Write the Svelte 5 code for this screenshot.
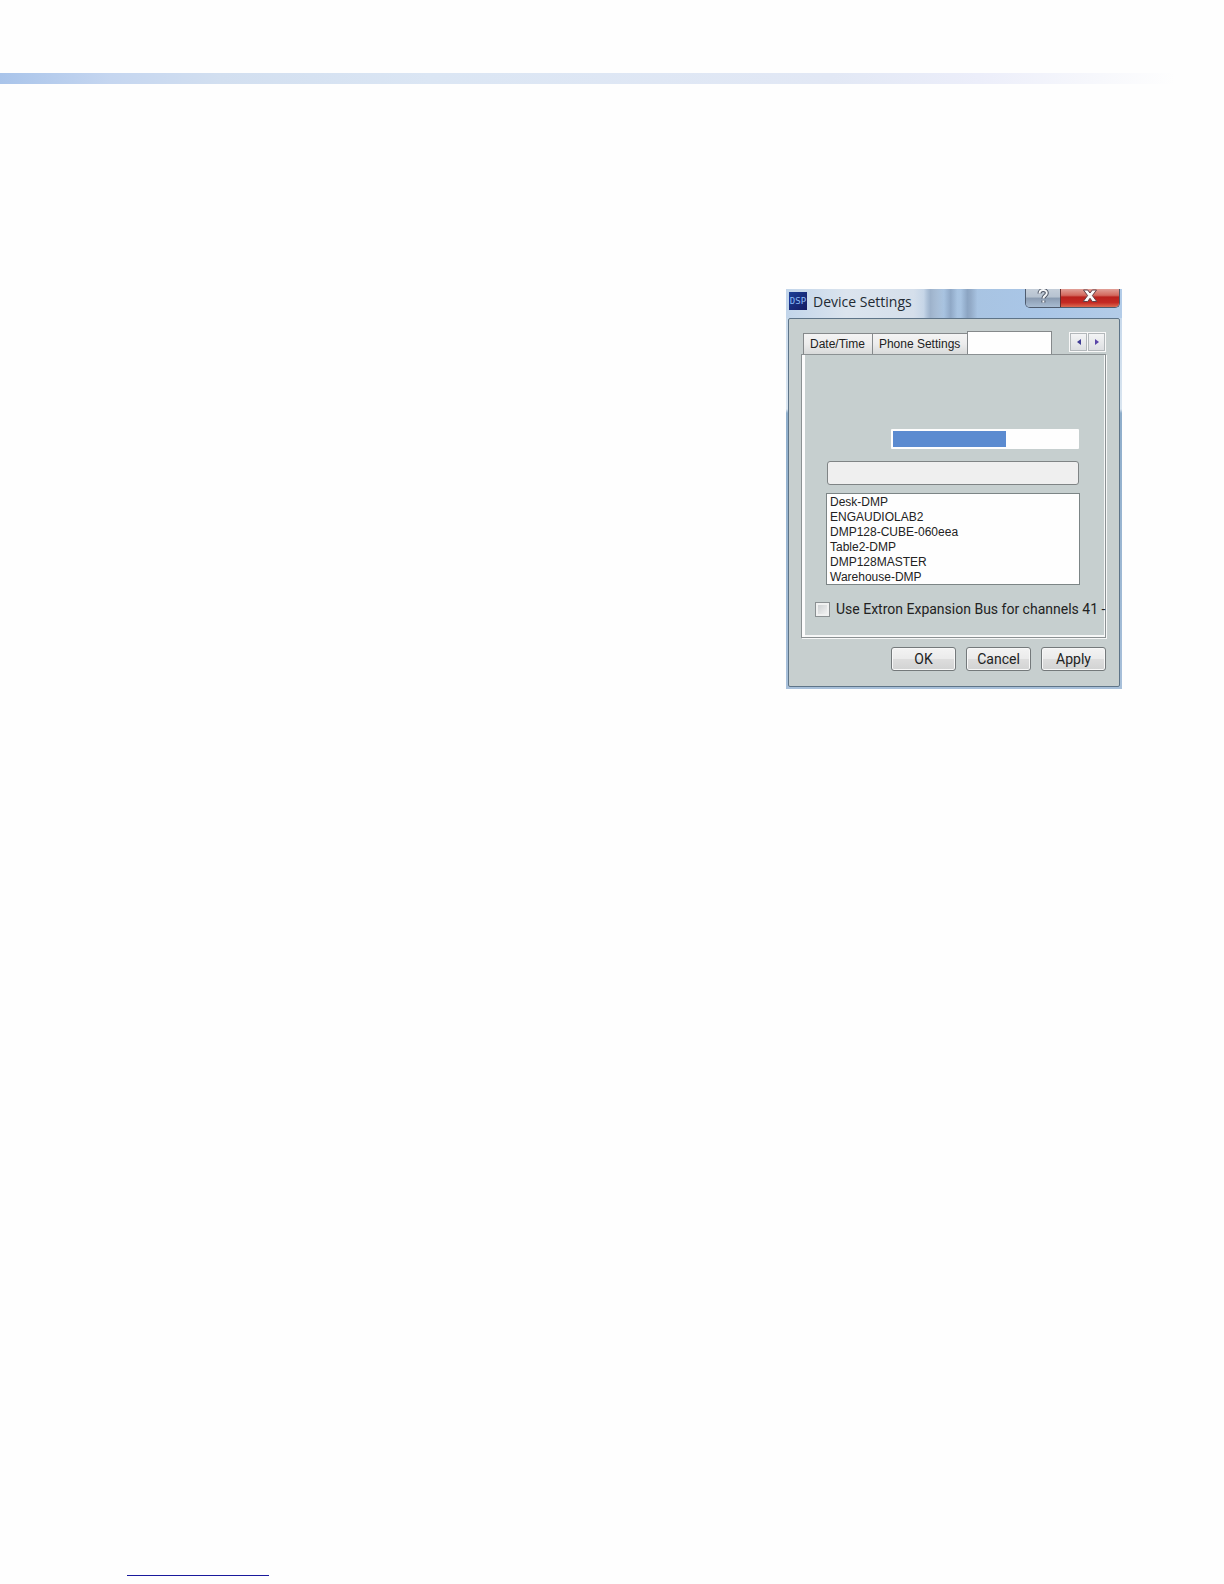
<script>
  let tabs = ['Date/Time', 'Phone Settings'];
  let devices = [
    'Desk-DMP',
    'ENGAUDIOLAB2',
    'DMP128-CUBE-060eea',
    'Table2-DMP',
    'DMP128MASTER',
    'Warehouse-DMP'
  ];
  let actions = ['OK', 'Cancel', 'Apply'];
</script>

<main class="page">
  <div class="rule"></div>

  <section class="window" aria-label="Device Settings">
    <header class="titlebar">
      <svg class="logo" viewBox="0 0 18 18" aria-hidden="true">
        <defs>
          <linearGradient id="logo-fill" x1="0" y1="0" x2="1" y2="1">
            <stop offset="0" stop-color="#1c3f96" />
            <stop offset="1" stop-color="#141a63" />
          </linearGradient>
        </defs>
        <rect width="18" height="18" fill="url(#logo-fill)" />
        <text x="9" y="12" text-anchor="middle" class="logo-text">DSP</text>
      </svg>
      <h1>Device Settings</h1>
      <div class="caption">
        <button class="help" aria-label="Help">
          <svg width="14" height="16" viewBox="0 0 14 16" aria-hidden="true">
            <path d="M3.5 4.5C3.5 0 10.8 0 10.8 4C10.8 6.7 7.4 6.6 7.4 9.6M7.4 11.4V13.6" fill="none" stroke="#4d5564" stroke-width="4" />
            <path d="M3.5 4.5C3.5 0 10.8 0 10.8 4C10.8 6.7 7.4 6.6 7.4 9.6M7.4 11.4V13.6" fill="none" stroke="#f4f6f8" stroke-width="2" />
          </svg>
        </button>
        <button class="close" aria-label="Close">
          <svg width="16" height="14" viewBox="0 0 16 14" aria-hidden="true">
            <path d="M1.5 1H5.7L8 4L10.3 1H14.5L10.4 6.6L14.8 12.5H10.3L8 9.3L5.7 12.5H1.2L5.6 6.6Z" fill="#fafafa" stroke="#634047" />
          </svg>
        </button>
      </div>
    </header>

    <div class="client">
      <div class="tabbar">
        <div class="tabs" role="tablist">
          {#each tabs as tab}
            <button class="tab" role="tab" aria-selected="false">{tab}</button>
          {/each}
          <button class="tab active" role="tab" aria-selected="true" aria-label="Current tab"></button>
        </div>
        <div class="scroller">
          <button aria-label="Previous tab">
            <svg width="6" height="8" viewBox="0 0 6 8" aria-hidden="true"><path d="M5 1V7L1 4Z" fill="#3f3c94" /></svg>
          </button>
          <button aria-label="Next tab">
            <svg width="6" height="8" viewBox="0 0 6 8" aria-hidden="true"><path d="M1 1V7L5 4Z" fill="#5a46a8" /></svg>
          </button>
        </div>
      </div>

      <div class="panel" role="tabpanel">
        <div class="controls">
          <div class="field">
            <span class="selection"></span>
            <input type="text" aria-label="Device name" />
          </div>
          <button class="wide" aria-label="Find devices"></button>
          <select class="devices" size="6" aria-label="Devices">
            {#each devices as device}
              <option>{device}</option>
            {/each}
          </select>
        </div>
        <label class="check">
          <input type="checkbox" />
          <span>Use Extron Expansion Bus for channels 41 -</span>
        </label>
      </div>

      <footer class="actions">
        {#each actions as action}
          <button>{action}</button>
        {/each}
      </footer>
    </div>
  </section>

  <a class="footlink" href="#top" aria-label="Back to top"></a>
</main>

<style>
  :global(body) {
    margin: 0;
    background: #fefefe;
  }

  .page,
  .page * {
    box-sizing: border-box;
  }

  .page {
    display: flex;
    flex-direction: column;
    min-height: 100vh;
    padding: 73px 0 8px;
    font-family: 'Liberation Sans', Arial, sans-serif;
    font-size: 12px;
    color: #222;
  }

  button,
  input,
  select {
    margin: 0;
    padding: 0;
    font: inherit;
    color: inherit;
  }

  .rule {
    height: 11px;
    background: linear-gradient(90deg, #a9c4ea 0%, #c5d6f0 9%, #d2dff0 18%, #dbe6f4 35%, #e2e8f5 68%, #eceefa 80%, #f7f8fc 90%, #fefefe 96%);
  }

  .window {
    display: flex;
    flex-direction: column;
    width: 336px;
    margin: 205px 102px 40px auto;
    padding: 0 2px 2px;
    background: linear-gradient(180deg, #c3d6ea 0, #d9e5f0 30%, #8faecb 31%, #a8c0da 100%);
  }

  .titlebar {
    display: flex;
    align-items: flex-start;
    height: 29px;
    margin: 0 -2px;
    padding-left: 3px;
    background:
      linear-gradient(90deg, transparent 41%, #9db2cb 43%, transparent 47%),
      linear-gradient(90deg, transparent 47%, #8fa8c6 49%, transparent 51%),
      linear-gradient(90deg, transparent 52%, #8ca5c3 54%, #93abc8 55%, transparent 57%),
      linear-gradient(90deg, #c2d5ea 0%, #dbe4ee 18%, #d5dfeb 38%, #a8c3e0 47%, #a9c6e7 75%, #b3cce8 100%);
  }

  .logo {
    width: 18px;
    height: 18px;
    margin-top: 3px;
  }

  .logo-text {
    font: 9px 'DejaVu Sans Mono', monospace;
    fill: #8dbcf6;
  }

  h1 {
    flex: 1;
    margin: 3px 0 0 6px;
    font: 14px/20px 'Open Sans', sans-serif;
    color: #222a33;
  }

  .caption {
    display: flex;
    width: 95px;
    height: 19px;
    margin-right: 2px;
    overflow: hidden;
    border: 1px solid #4e5b6e;
    border-top: 0;
    border-radius: 0 0 5px 5px;
  }

  .caption button {
    display: flex;
    justify-content: center;
    height: 18px;
    border: 0;
  }

  .help {
    width: 34px;
    background: linear-gradient(180deg, #c4ced9 0, #b6c2d0 45%, #8a9bb1 50%, #a8bbd1 100%);
  }

  .caption .close {
    flex: 1;
    border-left: 1px solid #6a2c2c;
    background: linear-gradient(180deg, #e1a098 0, #d3695e 35%, #b9211d 45%, #c42a24 75%, #dc6a50 100%);
  }

  .client {
    display: flex;
    flex-direction: column;
    padding: 12px 13px 15px 12px;
    border: 1px solid #5e7488;
    border-radius: 2px;
    background: #c7cfcf;
  }

  .tabbar {
    display: flex;
    justify-content: space-between;
    align-items: flex-start;
    padding-left: 2px;
  }

  .tabs {
    display: flex;
    align-items: flex-end;
  }

  .tab {
    height: 21px;
    padding: 0 6px;
    border: 1px solid #85898b;
    border-bottom: 0;
    border-right: 0;
    background: linear-gradient(180deg, #f4f4f4 0, #ececec 50%, #d8dada 100%);
    line-height: 18px;
    white-space: nowrap;
  }

  .tab:nth-child(-n + 2) {
    padding-right: 7px;
  }

  .tab.active {
    width: 85px;
    height: 23px;
    border-right: 1px solid #85898b;
    background: #fefefe;
  }

  .scroller {
    display: flex;
    gap: 1px;
    margin-top: 1px;
    padding: 1px;
    background: #f8f8f8;
  }

  .scroller button {
    display: flex;
    align-items: center;
    justify-content: center;
    width: 17px;
    height: 18px;
    border: 1px solid #b3b8bb;
    background: linear-gradient(180deg, #f3f4f5, #dddfe2);
  }

  .panel {
    display: flex;
    flex-direction: column;
    padding: 74px 0 19px 8px;
    border: 1px solid #8b9193;
    box-shadow: 1px 1px 0 #f6f7f7, inset 3px 0 0 #fcfcfc, inset -1px -2px 0 #f6f7f7;
    background: #c6cfcf;
  }

  .controls {
    display: flex;
    flex-direction: column;
    margin: 0 25px 0 16px;
  }

  .field {
    display: flex;
    height: 20px;
    margin: 0 1px 12px 65px;
    padding: 2px;
    border-radius: 1px;
    background: #fefefe;
  }

  .selection {
    width: 113px;
    background: #5b8bd0;
  }

  .field input {
    flex: 1;
    min-width: 0;
    border: 0;
    background: transparent;
  }

  .wide {
    height: 24px;
    margin: 0 1px 8px;
    border: 1px solid #7f8485;
    border-radius: 3px;
    background: #efefef;
  }

  .devices {
    height: 92px;
    padding: 1px 1px 0;
    overflow: hidden;
    border: 1px solid #7c8586;
    border-radius: 0;
    background: #fefefe;
    outline: 0;
  }

  .devices option {
    height: 15px;
    min-height: 0;
    padding: 0 2px;
    line-height: 14px;
  }

  .check {
    display: flex;
    align-items: center;
    gap: 6px;
    height: 17px;
    margin: 16px 0 0 5px;
    font: 14px/17px Roboto, sans-serif;
    white-space: nowrap;
  }

  .check input {
    flex: none;
    width: 15px;
    height: 15px;
    appearance: none;
    border: 1px solid #8a9092;
    background: linear-gradient(135deg, #c6cacc, #f8f8f8);
    box-shadow: inset 0 0 0 2px #f0f1f1;
  }

  .actions {
    display: flex;
    justify-content: flex-end;
    gap: 10px;
    margin-top: 9px;
  }

  .actions button {
    width: 65px;
    height: 24px;
    border: 1px solid #74797b;
    border-radius: 3px;
    background: linear-gradient(180deg, #f3f3f3 0, #ebebeb 48%, #dddddd 52%, #d2d3d3 100%);
    box-shadow: inset 0 0 0 1px #f8f8f8;
    font: 14px Roboto, sans-serif;
  }

  .footlink {
    display: block;
    width: 142px;
    height: 16px;
    margin: auto 0 0 127px;
    border-bottom: 1px solid #1a1a9c;
  }
</style>
